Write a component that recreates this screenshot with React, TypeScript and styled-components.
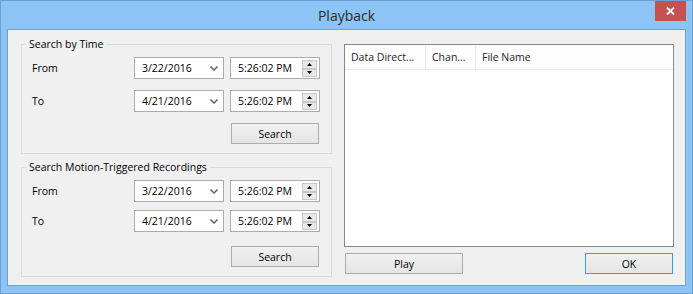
import styled, { createGlobalStyle } from 'styled-components'

const GlobalStyle = createGlobalStyle`
  html, body {
    margin: 0;
    padding: 0;
    background: #8bc4f5;
  }
  body {
    font-family: "Open Sans", "Noto Sans", "Liberation Sans", sans-serif;
    font-size: 10.5px;
    color: #000;
  }
`

interface SearchGroupProps {
    title: string;
    rowGap: number;
    buttonGap: number;
    from: string;
    to: string;
}

const SearchGroup: React.FC<SearchGroupProps> = ({title, rowGap, buttonGap, from, to}) => {
    const rows = [
        {label: "From", date: from},
        {label: "To", date: to},
    ]
    return (
        <Group>
            <Legend>{title}</Legend>
            <GroupBody $rowGap={rowGap} $buttonGap={buttonGap}>
                {rows.map((row) => (
                    <Row key={row.label}>
                        <Label>{row.label}</Label>
                        <Combo>
                            <span>{row.date}</span>
                            <svg width="8" height="5" viewBox="0 0 8 5">
                                <path d="M0.5 0.5 L4 4 L7.5 0.5" fill="none" stroke="#6d6d6d" strokeWidth="1.6" />
                            </svg>
                        </Combo>
                        <TimeBox>
                            <span>5:26:02 PM</span>
                            <Spinner>
                                <SpinHalf>
                                    <svg width="5" height="3" viewBox="0 0 5 3"><polygon points="2.5,0 5,3 0,3" fill="#000" /></svg>
                                </SpinHalf>
                                <SpinHalf>
                                    <svg width="5" height="3" viewBox="0 0 5 3"><polygon points="0,0 5,0 2.5,3" fill="#000" /></svg>
                                </SpinHalf>
                            </Spinner>
                        </TimeBox>
                    </Row>
                ))}
                <SearchButton>Search</SearchButton>
            </GroupBody>
        </Group>
    )
}

const App: React.FC = () => {
    return (
        <>
        <GlobalStyle />
        <Window>
            <TitleBar>
                <span />
                <Title>Playback</Title>
                <CloseButton>
                    <svg width="9" height="8" viewBox="0 0 9 8">
                        <path d="M1 0.5 L8 7.5 M8 0.5 L1 7.5" stroke="#fff" strokeWidth="1.8" />
                    </svg>
                </CloseButton>
            </TitleBar>
            <Client>
                <LeftColumn>
                    <SearchGroup title="Search by Time" rowGap={11} buttonGap={11} from="3/22/2016" to="4/21/2016" />
                    <SearchGroup title="Search Motion-Triggered Recordings" rowGap={8} buttonGap={14} from="3/22/2016" to="4/21/2016" />
                </LeftColumn>
                <RightColumn>
                    <ListView>
                        <ListHeader>
                            <HeaderCell $width={81}>Data Direct…</HeaderCell>
                            <HeaderCell $width={50}>Chan…</HeaderCell>
                            <HeaderCell>File Name</HeaderCell>
                        </ListHeader>
                    </ListView>
                    <ButtonRow>
                        <DialogButton $width={118}>Play</DialogButton>
                        <DialogButton $width={88} $default>OK</DialogButton>
                    </ButtonRow>
                </RightColumn>
            </Client>
        </Window>
        </>
    )
}

export default App;

const Window = styled.div`
width: 693px;
height: 294px;
box-sizing: border-box;
border: 1px solid #6e9fd3;
background: #8bc4f5;
display: flex;
flex-direction: column;
`

const TitleBar = styled.div`
height: 28px;
display: grid;
grid-template-columns: 1fr auto 1fr;
align-items: center;
`

const Title = styled.div`
font-size: 14px;
color: #2b2b2b;
padding-top: 1px;
`

const CloseButton = styled.div`
justify-self: end;
align-self: start;
margin-right: 6px;
width: 31px;
height: 20px;
background: #c75050;
display: flex;
align-items: center;
justify-content: center;
`

const Client = styled.div`
flex: 1;
margin: 0 6px 7px 6px;
border: 1px solid #6e9fd3;
background: #f0f0f0;
display: flex;
padding: 0 11px 0 13px;
`

const LeftColumn = styled.div`
width: 311px;
padding-top: 6px;
display: flex;
flex-direction: column;
gap: 5px;
`

const Group = styled.fieldset`
margin: 0;
padding: 0;
min-width: 0;
border: 1px solid #dcdcdc;
`

const Legend = styled.legend`
margin-left: 4px;
padding: 0 3px;
line-height: 16px;
`

const GroupBody = styled.div<{ $rowGap: number; $buttonGap: number }>`
display: flex;
flex-direction: column;
gap: ${p => p.$rowGap}px;
padding: 5px 11px 9px 0;

& > button {
    margin-top: ${p => p.$buttonGap - p.$rowGap}px;
}
`

const Row = styled.div`
display: grid;
grid-template-columns: 1fr 90px 90px;
column-gap: 6px;
height: 22px;
`

const Label = styled.div`
padding-left: 10px;
align-self: center;
`

const Field = styled.div`
box-sizing: border-box;
height: 22px;
border: 1px solid #acacac;
background: #fff;
display: flex;
align-items: center;
`

const Combo = styled(Field)`
padding: 0 5px 0 7px;
justify-content: space-between;
`

const TimeBox = styled(Field)`
padding: 0 2px 0 7px;
justify-content: space-between;
`

const Spinner = styled.div`
width: 15px;
height: 17px;
display: flex;
flex-direction: column;
margin-top: 1px;
`

const SpinHalf = styled.div`
flex: 1;
box-sizing: border-box;
background: #e8e8e8;
border: 1px solid #c8c8c8;
display: flex;
align-items: center;
justify-content: center;
`

const ButtonBase = styled.button`
box-sizing: border-box;
height: 21px;
padding: 0;
font-family: inherit;
font-size: 10.5px;
color: #000;
background: linear-gradient(#f0f0f0, #e5e5e5);
border: 1px solid #acacac;
`

const SearchButton = styled(ButtonBase)`
align-self: flex-end;
width: 88px;
margin-right: 1px;
`

const RightColumn = styled.div`
flex: 1;
margin-left: 12px;
padding: 14px 0 11px 0;
display: flex;
flex-direction: column;
gap: 6px;
`

const ListView = styled.div`
flex: 1;
border: 1px solid #828790;
background: #fff;
`

const ListHeader = styled.div`
display: flex;
height: 24px;
background: #fdfdfd;
border-bottom: 1px solid #e5edf5;
`

const HeaderCell = styled.div<{ $width?: number }>`
box-sizing: border-box;
${p => p.$width ? `width: ${p.$width}px;` : 'flex: 1;'}
padding-left: 6px;
border-right: ${p => p.$width ? '1px solid #e5edf5' : 'none'};
display: flex;
align-items: center;
white-space: nowrap;
overflow: hidden;
color: #1e1e1e;
`

const ButtonRow = styled.div`
display: flex;
justify-content: space-between;
padding: 0 1px;
`

const DialogButton = styled(ButtonBase)<{ $width: number; $default?: boolean }>`
width: ${p => p.$width}px;
border-color: ${p => p.$default ? '#3d9be9' : '#acacac'};
`
